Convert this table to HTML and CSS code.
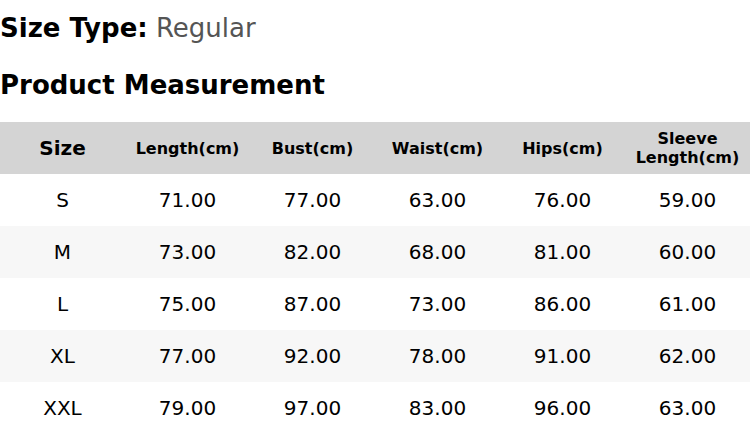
FILE: index.html
```html
<!DOCTYPE html>
<html>
<head>
<meta charset="utf-8">
<link rel="stylesheet" href="styles.css">
</head>
<body>
<div class="page">
  <p class="size-type"><span class="label">Size Type:</span> <span class="value">Regular</span></p>
  <h2 class="title">Product Measurement</h2>
  <table class="chart">
    <thead>
      <tr>
        <th class="first">Size</th>
        <th>Length(cm)</th>
        <th>Bust(cm)</th>
        <th>Waist(cm)</th>
        <th>Hips(cm)</th>
        <th>Sleeve<br>Length(cm)</th>
      </tr>
    </thead>
    <tbody>
      <tr><td>S</td><td>71.00</td><td>77.00</td><td>63.00</td><td>76.00</td><td>59.00</td></tr>
      <tr><td>M</td><td>73.00</td><td>82.00</td><td>68.00</td><td>81.00</td><td>60.00</td></tr>
      <tr><td>L</td><td>75.00</td><td>87.00</td><td>73.00</td><td>86.00</td><td>61.00</td></tr>
      <tr><td>XL</td><td>77.00</td><td>92.00</td><td>78.00</td><td>91.00</td><td>62.00</td></tr>
      <tr><td>XXL</td><td>79.00</td><td>97.00</td><td>83.00</td><td>96.00</td><td>63.00</td></tr>
    </tbody>
  </table>
</div>
</body>
</html>
```
FILE: styles.css
```css
html, body {
  margin: 0;
  padding: 0;
  background: #fff;
}
body {
  font-family: "DejaVu Sans", sans-serif;
  color: #000;
}
.page {
  width: 750px;
}
.size-type {
  margin: 0;
  padding-top: 12px;
  font-size: 26px;
  line-height: 32px;
}
.size-type .label {
  font-weight: bold;
}
.size-type .value {
  color: #555;
}
.title {
  margin: 0;
  padding-top: 25px;
  font-size: 26px;
  line-height: 32px;
  font-weight: bold;
}
.chart {
  margin-top: 21px;
  width: 750px;
  border-collapse: collapse;
  table-layout: fixed;
}
.chart th {
  background: #d4d4d4;
  height: 52px;
  padding: 0;
  font-size: 16px;
  line-height: 19px;
  font-weight: bold;
  text-align: center;
}
.chart th.first {
  font-size: 20px;
}
.chart td {
  height: 52px;
  padding: 0;
  font-size: 20px;
  text-align: center;
}
.chart tbody tr:nth-child(even) td {
  background: #f7f7f7;
}
```
